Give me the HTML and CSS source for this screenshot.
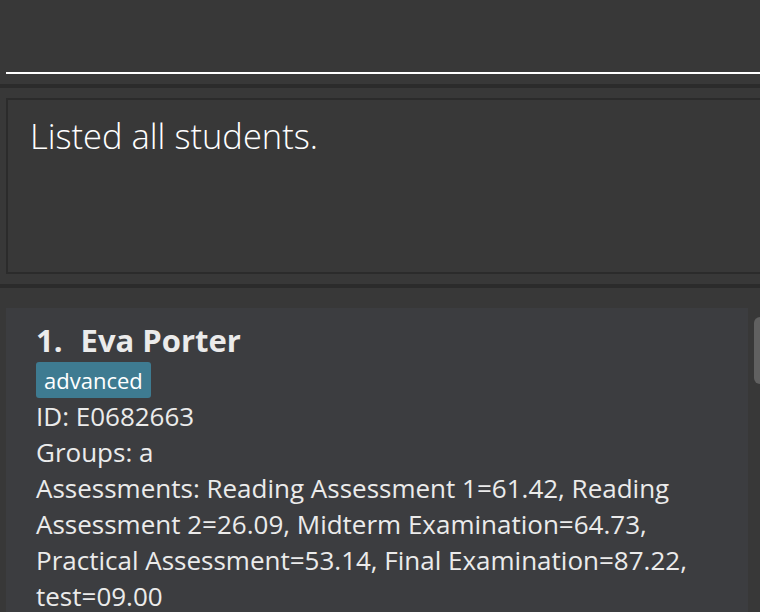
FILE: index.html
```html
<!DOCTYPE html>
<html>
<head>
<meta charset="utf-8">
<link rel="stylesheet" href="styles.css">
</head>
<body>
<div class="app">
  <div class="command">
    <div class="command-field"></div>
  </div>
  <div class="divider"></div>
  <div class="result">
    <div class="result-box">Listed all students.</div>
  </div>
  <div class="divider"></div>
  <div class="list">
    <div class="cards">
      <div class="card">
        <div class="name"><span class="index">1.</span><span>Eva Porter</span></div>
        <div class="tags"><span class="tag">advanced</span></div>
        <div class="line">ID: E0682663</div>
        <div class="line">Groups: a</div>
        <div class="line">Assessments: Reading Assessment 1=61.42, Reading Assessment 2=26.09, Midterm Examination=64.73, Practical Assessment=53.14, Final Examination=87.22, test=09.00</div>
      </div>
    </div>
    <div class="scroll"><div class="thumb"></div></div>
  </div>
</div>
</body>
</html>
```

FILE: styles.css
```css
html, body {
  margin: 0;
  padding: 0;
  background: #383838;
  overflow: hidden;
  height: 612px;
}
.app {
  font-family: "Open Sans", "Noto Sans", sans-serif;
  display: flex;
  flex-direction: column;
}
.command {
  padding: 0 0 10px 6px;
}
.command-field {
  height: 72px;
  border-bottom: 2px solid #ffffff;
}
.divider {
  height: 4px;
  background: #2b2b2b;
}
.result {
  padding: 10px 0 10px 6px;
}
.result-box {
  border: 2px solid #2b2b2b;
  border-right: none;
  box-sizing: content-box;
  padding: 12px 0 0 22px;
  height: 160px;
  color: #ffffff;
  font-size: 34.5px;
  font-weight: 300;
}
.list {
  display: flex;
  padding-top: 20px;
}
.cards {
  flex: 1;
  padding-left: 6px;
}
.card {
  background: #3c3d40;
  padding: 12px 30px 30px 30px;
  color: #ebebeb;
}
.name {
  display: flex;
  font-size: 31px;
  font-weight: 700;
  line-height: 41px;
}
.index {
  margin-right: 18px;
}
.tags {
  display: flex;
  margin-top: 1px;
}
.tag {
  background: #3e7b91;
  color: #ffffff;
  font-size: 22px;
  line-height: 32px;
  padding: 2px 8px;
  border-radius: 3px;
}
.line {
  font-size: 26px;
  line-height: 36px;
}
.scroll {
  width: 12px;
  padding-top: 9px;
  display: flex;
  justify-content: flex-end;
}
.thumb {
  width: 6px;
  height: 67px;
  background: #606060;
  border-radius: 6px 0 0 6px;
}
```
